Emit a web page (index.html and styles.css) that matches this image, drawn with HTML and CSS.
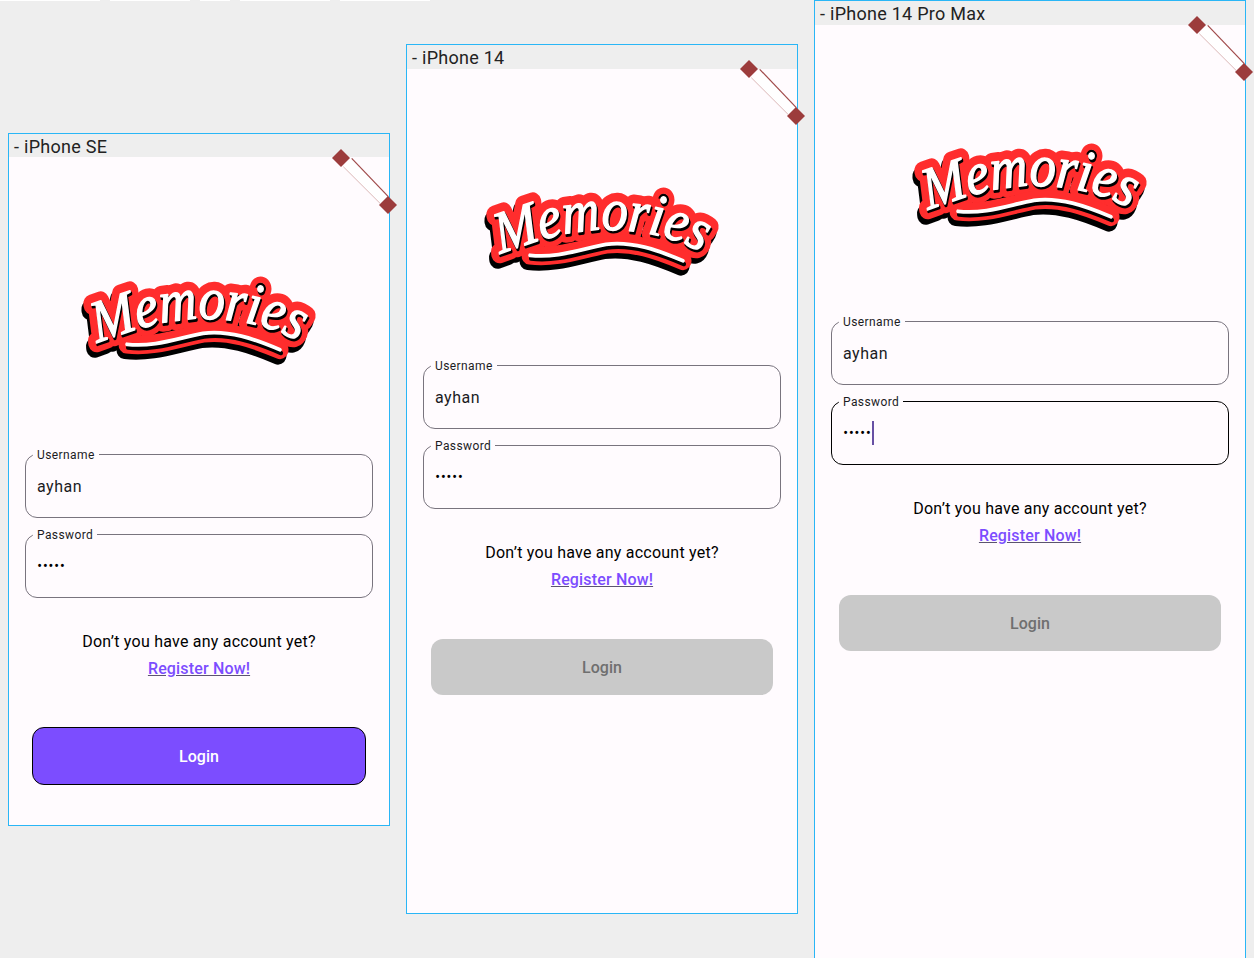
FILE: index.html
```html
<!DOCTYPE html>
<html lang="en">
<head>
<meta charset="utf-8">
<title>Memories login previews</title>
<link rel="stylesheet" href="styles.css">
</head>
<body>
<div class="strip"><i class="s1"></i><i class="s2"></i><i class="s3"></i><i class="s4"></i><i class="s5"></i></div>

<svg class="defs" width="0" height="0" aria-hidden="true">
  <defs>
    <path id="arc" d="M13 62 C60 45 100 38 130 40 C170 42 195 50 222 64"/>
    <text id="word" class="word" font-size="54"><textPath href="#arc" textLength="208" lengthAdjust="spacingAndGlyphs">Memories</textPath></text>
    <path id="swoosh" d="M43 63 C70 66 95 57 119 53 C145 50 170 58 196 68"/>
    <g id="logo" transform="translate(0 1) scale(1 1.1)">
      <g class="l-shadow" transform="translate(-2 5)"><use href="#word"/><use href="#swoosh"/></g>
      <g class="l-red"><use href="#word"/><use href="#swoosh"/></g>
      <g class="l-under" transform="translate(1 3)"><use href="#swoosh"/></g>
      <g class="l-dark" transform="translate(1 2)"><use href="#word"/></g>
      <g class="l-white"><use href="#word"/><use href="#swoosh"/></g>
    </g>
    <g id="handle">
      <path class="h-band" d="M19.7 9.3 L56.3 47.7 L48 54.3 L11.3 17.7 Z"/>
      <path class="h-edge" d="M19.7 9.3 L56.3 47.7"/>
      <path class="h-edge2" d="M11.3 17.7 L48 54.3"/>
      <path class="h-dia" d="M9 0 L18 9 L9 18 L0 9 Z"/>
      <path class="h-dia" d="M56 47 L65 56 L56 65 L47 56 Z"/>
    </g>
  </defs>
</svg>

<section class="frame se">
  <h2 class="title">- iPhone SE</h2>
  <svg class="handle" width="65" height="65" viewBox="0 0 65 65"><use href="#handle"/></svg>
  <div class="screen">
    <svg class="logo" width="230" height="90" viewBox="0 0 230 90"><use href="#logo"/></svg>
    <fieldset class="field"><legend>Username</legend><span class="value">ayhan</span></fieldset>
    <fieldset class="field second"><legend>Password</legend><span class="value dots">•••••</span></fieldset>
    <p class="ask">Don’t you have any account yet?</p>
    <a class="reg" href="#">Register Now!</a>
    <button class="btn active" type="button">Login</button>
  </div>
</section>

<section class="frame p14">
  <h2 class="title">- iPhone 14</h2>
  <svg class="handle" width="65" height="65" viewBox="0 0 65 65"><use href="#handle"/></svg>
  <div class="screen">
    <svg class="logo" width="230" height="90" viewBox="0 0 230 90"><use href="#logo"/></svg>
    <fieldset class="field"><legend>Username</legend><span class="value">ayhan</span></fieldset>
    <fieldset class="field second"><legend>Password</legend><span class="value dots">•••••</span></fieldset>
    <p class="ask">Don’t you have any account yet?</p>
    <a class="reg" href="#">Register Now!</a>
    <button class="btn" type="button">Login</button>
  </div>
</section>

<section class="frame pro">
  <h2 class="title">- iPhone 14 Pro Max</h2>
  <svg class="handle" width="65" height="65" viewBox="0 0 65 65"><use href="#handle"/></svg>
  <div class="screen">
    <svg class="logo" width="230" height="90" viewBox="0 0 230 90"><use href="#logo"/></svg>
    <fieldset class="field"><legend>Username</legend><span class="value">ayhan</span></fieldset>
    <fieldset class="field second focus"><legend>Password</legend><span class="value dots">•••••<b class="caret"></b></span></fieldset>
    <p class="ask">Don’t you have any account yet?</p>
    <a class="reg" href="#">Register Now!</a>
    <button class="btn" type="button">Login</button>
  </div>
</section>
</body>
</html>
```
FILE: styles.css
```css
* { box-sizing: border-box; }
html, body { margin: 0; height: 100%; }
body {
  position: relative;
  width: 1254px;
  height: 958px;
  overflow: hidden;
  background: #eeeeee;
  font-family: Roboto, "Liberation Sans", sans-serif;
  color: #000;
}
.strip { display: flex; gap: 10px; height: 1px; }
.strip i { display: block; height: 1px; background: #fff; }
.s1 { width: 100px; } .s2 { width: 80px; } .s3 { width: 30px; } .s4 { width: 90px; } .s5 { width: 90px; }
.defs { position: absolute; }

.frame {
  position: absolute;
  border: 1px solid #29b6f6;
  display: flex;
  flex-direction: column;
}
.se { left: 8px; top: 133px; width: 382px; height: 693px; }
.p14 { left: 406px; top: 44px; width: 392px; height: 870px; }
.pro { left: 814px; top: 0; width: 432px; height: 959px; }

.title {
  margin: 0;
  height: 24px;
  padding-left: 5px;
  font-size: 18px;
  font-weight: 400;
  line-height: 25px;
  letter-spacing: .27px;
  color: #222;
  background: #eeeeee;
  white-space: nowrap;
}
.se .title { height: 23px; }
.handle { position: absolute; right: -8px; top: 15px; overflow: visible; }
.h-band { fill: #fff; }
.h-edge { stroke: #a04a4a; stroke-width: 1.2; fill: none; }
.h-edge2 { stroke: #dcb8b8; stroke-width: 1; fill: none; }
.h-dia { fill: #9c3c3c; }

.screen {
  flex: 1;
  display: flex;
  flex-direction: column;
  align-items: center;
  background: #fffbfe;
  padding: 0 16px;
}
.logo { margin-top: 116px; margin-bottom: 82px; flex: none; overflow: visible; }
.se .logo { margin-top: 117px; }
.word {
  font-family: "Liberation Serif", serif;
  font-style: italic;
  font-weight: 400;
}
.l-shadow, .l-red, .l-under, .l-dark, .l-white { stroke-linejoin: round; stroke-linecap: round; }
.l-shadow { fill: #000; stroke: #000; stroke-width: 17; }
.l-red { fill: #ff2d2d; stroke: #ff2d2d; stroke-width: 17; }
.l-under { fill: none; stroke: #000; stroke-width: 4; }
.l-dark { fill: #000; stroke: #000; stroke-width: 2.2; }
.l-white { fill: #fff; stroke: #fff; stroke-width: 1.3; }
#swoosh { fill: none; }
.l-white use:last-child { stroke-width: 3.5; }

.field {
  align-self: stretch;
  margin: 0;
  min-width: 0;
  height: 72px;
  padding: 0 11px;
  border: 1px solid #79747e;
  border-radius: 12px;
  display: flex;
  flex-direction: column;
}
.field legend {
  margin-left: -4px;
  padding: 2px 4px 0;
  font-size: 12px;
  line-height: 14px;
  letter-spacing: .4px;
  color: #1c1b1f;
}
.second { margin-top: 8px; }
.focus { border-color: #000; }
.value {
  margin-top: 13px;
  font-size: 16px;
  line-height: 24px;
  letter-spacing: .5px;
  color: #1c1b1f;
  display: flex;
  align-items: center;
}
.dots { color: #000; font-weight: 300; margin-top: 12px; }
.caret {
  display: block;
  width: 2px;
  height: 24px;
  margin-left: 1px;
  background: #6750a4;
}

.ask {
  margin: 33px 0 0;
  font-size: 16px;
  line-height: 22px;
  text-align: center;
  letter-spacing: .23px;
  color: #000;
}
.reg {
  margin-top: 5px;
  font-size: 16px;
  line-height: 22px;
  font-weight: 500;
  letter-spacing: .16px;
  color: #7c4dff;
  text-decoration: underline;
  text-decoration-color: #5c5470;
}
.btn {
  margin: 48px 8px 0;
  align-self: stretch;
  height: 56px;
  padding-top: 2px;
  border: 0;
  border-radius: 12px;
  background: #c9c9c9;
  color: #6f6f6f;
  font: 500 16px/24px Roboto, "Liberation Sans", sans-serif;
}
.btn.active {
  margin: 47px 7px 0;
  height: 58px;
  border: 1px solid #000;
  background: #7c4dff;
  color: #fff;
}
```
